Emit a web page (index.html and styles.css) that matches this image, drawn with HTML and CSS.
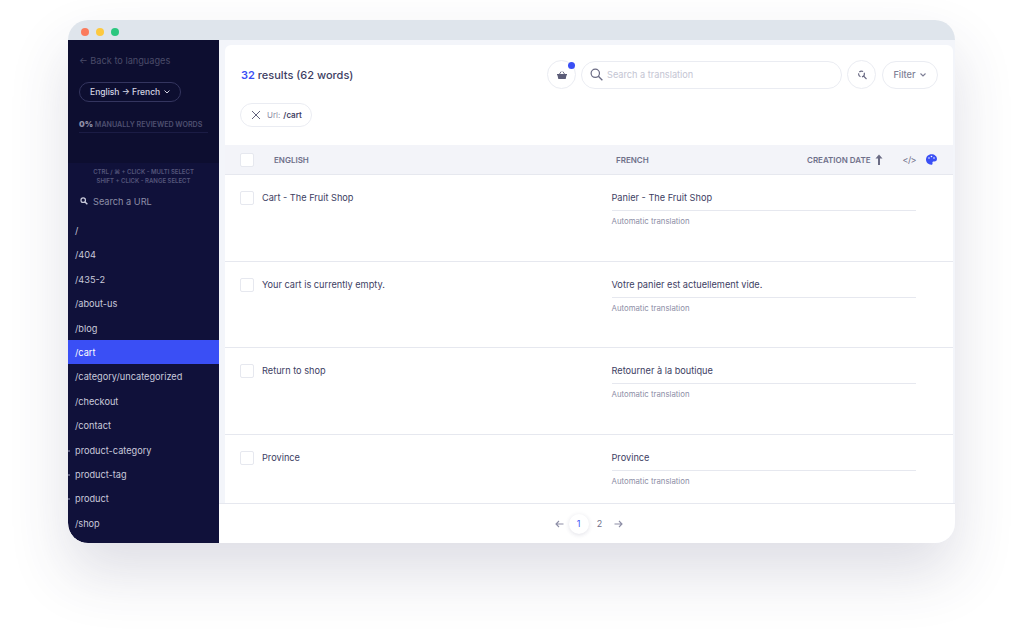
FILE: index.html
```html
<!DOCTYPE html>
<html lang="en">

<head>
  <meta charset="UTF-8">
  <meta name="viewport" content="width=device-width, initial-scale=1.0">
  <title>Translations</title>
  <link rel="stylesheet" href="styles.css">
</head>

<body>
  <div class="window">
    <div class="titlebar">
      <span class="dot red"></span>
      <span class="dot yellow"></span>
      <span class="dot green"></span>
    </div>
    <div class="app">
      <aside class="side">
        <div class="side-top">
          <p class="back">&larr; Back to languages</p>
          <div class="lang">English &rarr; French
            <svg width="8" height="6" viewBox="0 0 8 6"><path d="M1.5 1.5L4 4l2.500-2.500" fill="none" stroke="#d5d6e4" stroke-width="1"/></svg>
          </div>
          <p class="review"><b>0%</b> MANUALLY REVIEWED WORDS</p>
          <div class="review-bar"></div>
        </div>
        <div class="side-bottom">
          <p class="hint">CTRL / &#8984; + CLICK - MULTI SELECT<br>SHIFT + CLICK - RANGE SELECT</p>
          <div class="url-search">
            <svg width="8" height="8" viewBox="0 0 10 10"><circle cx="4" cy="4" r="2.800" fill="none" stroke="#c9cadb" stroke-width="1.500"/><path d="M6 6l3.200 3.200" stroke="#c9cadb" stroke-width="1.800"/></svg>
            Search a URL
          </div>
          <ul class="urls">
            <li>/</li>
            <li>/404</li>
            <li>/435-2</li>
            <li>/about-us</li>
            <li>/blog</li>
            <li class="active">/cart</li>
            <li>/category/uncategorized</li>
            <li>/checkout</li>
            <li>/contact</li>
            <li class="parent">product-category</li>
            <li class="parent">product-tag</li>
            <li class="parent">product</li>
            <li>/shop</li>
          </ul>
        </div>
      </aside>
      <main class="main">
        <div class="panel">
          <div class="toolbar">
            <h2 class="count"><span>32</span> results (62 words)</h2>
            <div class="tools">
              <div class="round basket">
                <svg width="10" height="8" viewBox="0 0 10 8"><path d="M0 3h10v1.200h-.5L8.700 8H1.300L.5 4.200H0z" fill="#5c5d78"/><path d="M2.500 3L4.200.5M7.500 3L5.800.5" stroke="#5c5d78" stroke-width=".9"/></svg>
                <i class="badge"></i>
              </div>
              <div class="search">
                <svg width="13" height="13" viewBox="0 0 14 14"><circle cx="5.700" cy="5.700" r="4.500" fill="none" stroke="#6a6b84" stroke-width="1.300"/><path d="M9 9l4.300 4.300" stroke="#6a6b84" stroke-width="1.500"/></svg>
                <span>Search a translation</span>
              </div>
              <div class="round">
                <svg width="10" height="10" viewBox="0 0 10 10"><circle cx="4.500" cy="4" r="2.900" fill="none" stroke="#6a6b84" stroke-width="1.200" stroke-dasharray="4 1.500"/><path d="M6.500 6l3 3" stroke="#6a6b84" stroke-width="1.100"/></svg>
              </div>
              <div class="filter">Filter
                <svg width="8" height="6" viewBox="0 0 8 6"><path d="M1.500 1.500L4 4l2.500-2.500" fill="none" stroke="#7d7e95" stroke-width="1.100"/></svg>
              </div>
            </div>
          </div>
          <div class="chips">
            <div class="chip">
              <svg width="10" height="10" viewBox="0 0 10 10"><path d="M1 1l8 8M9 1l-8 8" stroke="#62637d" stroke-width="1"/></svg>
              <span class="chip-key">Url:</span> <b>/cart</b>
            </div>
          </div>
          <div class="thead">
            <span class="check"></span>
            <span class="th-en">ENGLISH</span>
            <span class="th-fr">FRENCH</span>
            <span class="th-date">CREATION DATE</span>
            <svg class="th-arrow" width="8" height="11" viewBox="0 0 8 11"><path d="M4 0.500L7.500 4.500H5V11H3V4.500H0.500z" fill="#6a6b84"/></svg>
            <span class="th-code">&lt;/&gt;</span>
            <svg width="11" height="11" viewBox="0 0 11 11"><path d="M5.500 0.300C8.600 0.300 11 2.400 11 5c0 1.800-1.500 2.600-3 2.500-1.200-.1-1.800.5-1.500 1.400.3 1-.2 1.800-1.200 1.800C2.400 10.700 0 8.400 0 5.500 0 2.600 2.400.3 5.500.3z" fill="#3a4ff5"/><circle cx="3" cy="4" r=".8" fill="#f3f4f9"/><circle cx="5.500" cy="2.500" r=".8" fill="#f3f4f9"/><circle cx="8" cy="4" r=".8" fill="#f3f4f9"/></svg>
          </div>
          <div class="row">
            <span class="check"></span>
            <p class="source">Cart - The Fruit Shop</p>
            <div class="target"><p class="fr">Panier - The Fruit Shop</p><p class="auto">Automatic translation</p></div>
          </div>
          <div class="row">
            <span class="check"></span>
            <p class="source">Your cart is currently empty.</p>
            <div class="target"><p class="fr">Votre panier est actuellement vide.</p><p class="auto">Automatic translation</p></div>
          </div>
          <div class="row">
            <span class="check"></span>
            <p class="source">Return to shop</p>
            <div class="target"><p class="fr">Retourner à la boutique</p><p class="auto">Automatic translation</p></div>
          </div>
          <div class="row last">
            <span class="check"></span>
            <p class="source">Province</p>
            <div class="target"><p class="fr">Province</p><p class="auto">Automatic translation</p></div>
          </div>
        </div>
        <div class="pager">
          <svg width="9" height="8" viewBox="0 0 9 8"><path d="M8.500 4H1M4 1L1 4l3 3" fill="none" stroke="#8d8ea6" stroke-width="1.100"/></svg>
          <span class="page current">1</span>
          <span class="page">2</span>
          <svg width="9" height="8" viewBox="0 0 9 8"><path d="M.5 4H8M5 1l3 3-3 3" fill="none" stroke="#8d8ea6" stroke-width="1.100"/></svg>
        </div>
      </main>
    </div>
  </div>
</body>

</html>
```

FILE: styles.css
```css
* {
  margin: 0;
  padding: 0;
  box-sizing: border-box;
}

ul {
  list-style: none;
}

body {
  height: 639px;
  overflow: hidden;
  background: #fff;
  font-family: Inter, "Liberation Sans", sans-serif;
  color: #3d3e63;
}

.window {
  width: 887px;
  height: 523px;
  margin: 20px 0 0 68px;
  display: flex;
  flex-direction: column;
  border-radius: 20px;
  overflow: hidden;
  box-shadow: 0 30px 60px rgba(50, 50, 93, .16);
}

.titlebar {
  height: 20px;
  flex: none;
  display: flex;
  align-items: center;
  gap: 7px;
  padding: 4px 0 0 13px;
  background: #dfe5ec;
}

.dot {
  width: 8px;
  height: 8px;
  border-radius: 50%;
}

.red { background: #fb7b5d; }
.yellow { background: #fdc93f; }
.green { background: #2cc77f; }

.app {
  flex: 1;
  display: flex;
  min-height: 0;
}

.side {
  width: 151px;
  flex: none;
  display: flex;
  flex-direction: column;
  background: #10113a;
  border-bottom-left-radius: 20px;
}

.side-top {
  height: 123px;
  flex: none;
  padding: 15px 11px 0;
  background: #0d0e30;
}

.back {
  font-size: 9.2px;
  line-height: 12px;
  color: #4a4b68;
}

.lang {
  display: flex;
  align-items: center;
  gap: 3px;
  width: 102px;
  height: 20px;
  margin-top: 15px;
  padding-left: 10px;
  border: 1px solid #34355f;
  border-radius: 10px;
  font-size: 8.5px;
  font-weight: 500;
  color: #d5d6e4;
}

.review {
  margin-top: 17px;
  font-size: 7.1px;
  line-height: 10px;
  font-weight: 600;
  color: #4f5070;
}

.review b {
  font-size: 8px;
  color: #8d8ea6;
}

.review-bar {
  height: 1px;
  margin-top: 2px;
  background: #1b1c45;
}

.side-bottom {
  flex: 1;
  min-height: 0;
}

.hint {
  padding-top: 5px;
  text-align: center;
  font-size: 6px;
  line-height: 8.5px;
  font-weight: 600;
  color: #55567a;
}

.url-search {
  display: flex;
  align-items: center;
  gap: 5px;
  height: 14px;
  margin: 9px 0 0 12px;
  font-size: 9.2px;
  color: #8d8ea6;
}

.urls {
  margin-top: 10px;
}

.urls li {
  position: relative;
  height: 24.4px;
  padding-left: 7px;
  font-size: 9.2px;
  line-height: 25px;
  color: #c9cadb;
}

.urls .parent::before {
  content: "";
  position: absolute;
  left: 0;
  top: 12px;
  width: 2px;
  height: 2px;
  background: #55567a;
}

.urls .active {
  background: #3a4ff5;
  color: #fff;
}

.main {
  flex: 1;
  min-width: 0;
  display: flex;
  flex-direction: column;
  background: #f3f5fa;
}

.panel {
  flex: 1;
  min-height: 0;
  margin: 5px 2px 0 6px;
  background: #fff;
  border-radius: 6px 6px 0 0;
}

.toolbar {
  height: 58px;
  display: flex;
  align-items: center;
  justify-content: space-between;
  padding: 1px 15px 0 16px;
}

.count {
  font-size: 11px;
  font-weight: 500;
}

.count span {
  color: #3a4ff5;
  font-weight: 600;
}

.tools {
  display: flex;
  align-items: center;
  gap: 5px;
}

.round {
  position: relative;
  width: 29px;
  height: 29px;
  display: flex;
  align-items: center;
  justify-content: center;
  border: 1px solid #eaecf2;
  border-radius: 50%;
}

.badge {
  position: absolute;
  top: 1px;
  right: 0;
  width: 7px;
  height: 7px;
  border-radius: 50%;
  background: #3a4ff5;
}

.search {
  width: 261px;
  height: 28px;
  display: flex;
  align-items: center;
  gap: 4px;
  padding-left: 8px;
  border: 1px solid #eaecf2;
  border-radius: 14px;
  font-size: 9.2px;
  color: #c4c5d3;
}

.filter {
  width: 56px;
  height: 28px;
  margin-left: 1px;
  display: flex;
  align-items: center;
  justify-content: center;
  gap: 3px;
  border: 1px solid #eaecf2;
  border-radius: 14px;
  font-size: 9.2px;
  font-weight: 500;
  color: #7d7e95;
}

.chips {
  height: 42px;
  padding-left: 15px;
}

.chip {
  display: inline-flex;
  align-items: center;
  gap: 3px;
  height: 24px;
  padding: 0 9px 0 10px;
  border: 1px solid #eaecf2;
  border-radius: 12px;
  font-size: 8px;
}

.chip svg {
  margin-right: 3px;
}

.chip-key {
  color: #8d8ea6;
}

.chip b {
  font-weight: 600;
}

.check {
  width: 14px;
  height: 14px;
  flex: none;
  background: #fff;
  border: 1px solid #e6e8ef;
  border-radius: 2px;
}

.thead {
  height: 30px;
  display: flex;
  align-items: center;
  padding-left: 15px;
  background: #f3f4f9;
  border-bottom: 1px solid #e6e8ef;
  font-size: 8px;
  font-weight: 600;
  color: #6f708a;
}

.th-en {
  width: 342px;
  margin-left: 20px;
}

.th-fr {
  width: 191px;
}

.th-arrow {
  margin-left: 4px;
}

.th-code {
  margin: 0 10px 0 20px;
  font-size: 9px;
  font-weight: 400;
  letter-spacing: -.6px;
}

.row {
  height: 86.5px;
  display: flex;
  padding: 16px 0 0 15px;
  border-bottom: 1px solid #e6e8ef;
  font-size: 9.2px;
}

.row.last {
  height: 68px;
  border-bottom: 0;
}

.source {
  width: 349.5px;
  margin-left: 8px;
  line-height: 14px;
}

.target {
  width: 304px;
}

.fr {
  height: 20px;
  line-height: 14px;
  border-bottom: 1px solid #e6e8ef;
}

.auto {
  margin-top: 5px;
  font-size: 7.8px;
  line-height: 10px;
  color: #8d8ea6;
}

.pager {
  height: 40px;
  flex: none;
  display: flex;
  align-items: center;
  justify-content: center;
  gap: 1px;
  padding-left: 3px;
  background: #fff;
  border-top: 1px solid #e6e8ef;
  border-bottom-right-radius: 20px;
}

.page {
  width: 20px;
  height: 20px;
  display: flex;
  align-items: center;
  justify-content: center;
  border-radius: 50%;
  font-size: 9px;
  color: #6f708a;
}

.current {
  margin-left: 4px;
  color: #3a4ff5;
  box-shadow: 0 1px 4px rgba(50, 50, 93, .15);
}

.pager svg:last-child {
  margin-left: 3px;
}
```
